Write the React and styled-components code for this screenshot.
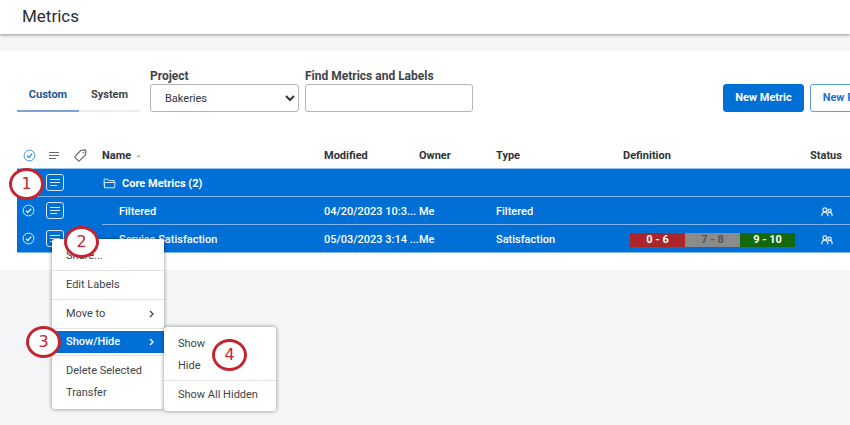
import React from 'react';
import styled, { createGlobalStyle } from 'styled-components';

const GlobalStyle = createGlobalStyle`
    *,
    *::before,
    *::after {
        box-sizing: border-box;
    }

    html {
        background: #f4f5f7;
        overflow: hidden;
    }

    body {
        margin: 0;
        color: #32363a;
        font-family: Roboto, 'Liberation Sans', sans-serif;
        font-size: 11px;
        line-height: 16px;
    }

    button,
    input,
    select {
        font: inherit;
        color: inherit;
    }
`;

const Page = styled.div`
    position: relative;
    min-height: 100vh;
    overflow: hidden;
`;

const Header = styled.header`
    padding: 4px 22px 6px;
    background: #fff;
    box-shadow: 0 1px 3px rgba(0, 0, 0, 0.4);

    h1 {
        margin: 0;
        font-size: 17px;
        line-height: 24px;
        font-weight: 400;
        color: #2b2d30;
    }
`;

const Panel = styled.main`
    margin-top: 17px;
    padding: 17px 0 17px 17px;
    background: #fff;
`;

const Toolbar = styled.div`
    display: flex;
    align-items: flex-end;
    gap: 6px;
`;

const Tabs = styled.div`
    display: flex;
    margin-right: 4px;
`;

const Tab = styled.button`
    width: ${(props) => (props.$active ? '62px' : '61px')};
    padding: 0 0 7px;
    border: none;
    border-bottom: 2px solid ${(props) => (props.$active ? '#7ba5d6' : '#ededef')};
    background: none;
    color: ${(props) => (props.$active ? '#1c5599' : '#404347')};
    font-size: 11px;
    line-height: 16px;
    font-weight: 700;
    cursor: pointer;
`;

const Field = styled.div`
    display: flex;
    flex-direction: column;
    width: ${(props) => props.$width};

    label {
        font-size: 12px;
        font-weight: 700;
        color: #404347;
    }

    select,
    input {
        width: 100%;
        height: 28px;
        border: 1px solid #b4b5b8;
        border-radius: 3px;
        background: #fff;
    }

    select {
        padding: 0 0 0 10px;
    }
`;

const Actions = styled.div`
    display: flex;
    gap: 6px;
    width: 127px;
    margin-left: auto;
    overflow: hidden;
`;

const ActionButton = styled.button`
    flex: none;
    min-width: 81px;
    height: 28px;
    padding: 0 11px;
    border: 1px solid ${(props) => (props.$primary ? '#006fd6' : '#5b9fe3')};
    border-radius: 3px;
    background: ${(props) => (props.$primary ? '#006fd6' : '#fff')};
    color: ${(props) => (props.$primary ? '#fff' : '#1a74d2')};
    font-size: 11px;
    font-weight: 700;
    white-space: nowrap;
    cursor: pointer;
`;

const Table = styled.table`
    width: 100%;
    margin-top: 29px;
    border-collapse: separate;
    border-spacing: 0;
    table-layout: fixed;

    th,
    td {
        height: 28px;
        padding: 2px 0 0;
        text-align: left;
        white-space: nowrap;
    }

    th {
        border-bottom: 1px solid #9cc4ee;
        font-size: 11px;
        font-weight: 700;
        color: #2f3236;
    }

    svg {
        display: block;
    }
`;

const Row = styled.tr`
    background: #006fd6;
    color: #fff;
    font-weight: 500;

    td {
        border-bottom: 1px solid #7fb5eb;
    }

    td:nth-child(-n + 3) {
        padding-top: 0;
        border-bottom-color: ${(props) => (props.$split ? '#006fd6' : '#7fb5eb')};
    }
`;

const HeadLabel = styled.span`
    display: flex;
    align-items: center;
    gap: 5px;
`;

const IconCell = styled.div`
    display: flex;
    padding-left: ${(props) => props.$inset || '5px'};
`;

const GroupName = styled.div`
    display: flex;
    align-items: center;
    gap: 6px;
    padding-left: 1px;
    font-weight: 700;
`;

const MetricName = styled.div`
    padding-left: 17px;
`;

const RowMenuButton = styled.button`
    display: flex;
    align-items: center;
    justify-content: center;
    width: 18px;
    height: 17px;
    padding: 0;
    border: 1px solid #d5e7f9;
    border-radius: 3px;
    background: none;
    color: #d5e7f9;
    cursor: pointer;
`;

const Scale = styled.div`
    display: flex;
    width: 165px;
    margin-left: 7px;
`;

const Band = styled.span`
    flex: 1;
    height: 14px;
    line-height: 14px;
    text-align: center;
    font-weight: 700;
    background: ${(props) => props.$fill};
    color: ${(props) => props.$ink || '#fff'};
`;

const Menu = styled.div`
    position: absolute;
    top: ${(props) => props.$top};
    left: ${(props) => props.$left};
    width: 112px;
    padding: 5px 0;
    border-radius: 3px;
    background: #fff;
    box-shadow: 0 0 4px rgba(0, 0, 0, 0.45);
`;

const MenuGroup = styled.div`
    padding: ${(props) => props.$pad || '3px 0'};

    & + & {
        border-top: 1px solid #e3e4e6;
    }
`;

const MenuItem = styled.button`
    display: flex;
    align-items: center;
    justify-content: space-between;
    width: 100%;
    height: 22px;
    padding: 0 9px 0 14px;
    border: none;
    background: ${(props) => (props.$active ? '#006fd6' : 'none')};
    color: ${(props) => (props.$active ? '#fff' : '#404347')};
    font-size: 11px;
    font-weight: ${(props) => (props.$active ? 500 : 400)};
    white-space: nowrap;
    cursor: pointer;
`;

const Marker = styled.span`
    position: absolute;
    top: ${(props) => props.$top};
    left: ${(props) => props.$left};
    width: 35px;
    height: 32px;
    border: 3px solid #c4242f;
    border-radius: 50%;
    background: #fff;
    color: #c4242f;
    font-family: 'DejaVu Sans', sans-serif;
    font-size: 16px;
    line-height: 25px;
    text-align: center;
`;

const CheckIcon = ({ color }) => (
    <svg width="13" height="13" viewBox="0 0 13 13" fill="none" stroke={color}>
        <circle cx="6.5" cy="6.5" r="5.4" />
        <path d="M4 6.7l1.8 1.8L9.2 4.8" strokeWidth="1.3" />
    </svg>
);

const LinesIcon = ({ color = 'currentColor' }) => (
    <svg width="10" height="9" viewBox="0 0 10 9" fill="none" stroke={color}>
        <path d="M0 1.5h10M0 4.5h10M0 7.5h7" />
    </svg>
);

const TagIcon = () => (
    <svg width="13" height="13" viewBox="0 0 13 13" fill="none" stroke="#66696d">
        <path
            d="M6.6 1.5l4-.6c.8 0 1.3.6 1.3 1.2l-.4 3.7-5.9 5.9c-.4.4-.9.4-1.3 0L1.1 8.6c-.4-.4-.4-.9 0-1.3z"
            strokeWidth="1.2"
            strokeLinejoin="round"
        />
        <circle cx="9.4" cy="3.6" r=".5" strokeWidth=".8" />
    </svg>
);

const FolderIcon = () => (
    <svg width="13" height="11" viewBox="0 0 13 11" fill="none" stroke="#d5e7f9">
        <path
            d="M1.5 9.8L1 1.2h3.8l1 1.3h5.4l.3 1.8M1.5 9.8l-.3-5.3h11l-.7 5.3z"
            strokeLinejoin="round"
        />
    </svg>
);

const SortIcon = () => (
    <svg width="5" height="4" viewBox="0 0 5 4" fill="none" stroke="#85878a">
        <path d="M.8 3.2l1.7-2 1.7 2" />
    </svg>
);

const PeopleIcon = () => (
    <svg
        width="12"
        height="10"
        viewBox="0 0 12 10"
        fill="none"
        stroke="#e5f0fb"
        strokeWidth="1.2"
    >
        <circle cx="3.9" cy="2.8" r="2" />
        <path d="M.8 9.2C.8 6.6 2 5.2 3.9 5.2S6.7 6.6 7 9.2" />
        <circle cx="8.6" cy="3.7" r="1.6" />
        <path d="M7.2 6.1c.4-.5.9-.7 1.5-.7 1.6 0 2.5 1.3 2.5 3.8" />
    </svg>
);

const ChevronIcon = () => (
    <svg width="7" height="8" viewBox="0 0 7 8" fill="none" stroke="currentColor">
        <path d="M2 1l3 3-3 3" strokeWidth="1.3" />
    </svg>
);

const metrics = [
    {
        name: 'Filtered',
        modified: '04/20/2023 10:3...',
        owner: 'Me',
        type: 'Filtered',
    },
    {
        name: 'Service Satisfaction',
        modified: '05/03/2023 3:14 ...',
        owner: 'Me',
        type: 'Satisfaction',
        bands: true,
    },
];

const RowMenu = ({ label }) => (
    <IconCell $inset="3px">
        <RowMenuButton type="button" aria-label={label}>
            <LinesIcon />
        </RowMenuButton>
    </IconCell>
);

const MetricsTable = () => (
    <Table>
        <colgroup>
            <col style={{ width: 26 }} />
            <col style={{ width: 31 }} />
            <col style={{ width: 28 }} />
            <col />
            <col style={{ width: 95 }} />
            <col style={{ width: 77 }} />
            <col style={{ width: 127 }} />
            <col style={{ width: 187 }} />
            <col style={{ width: 40 }} />
        </colgroup>
        <thead>
            <tr>
                <th aria-label="Select">
                    <IconCell $inset="6px">
                        <CheckIcon color="#3d8fdf" />
                    </IconCell>
                </th>
                <th aria-label="Actions">
                    <IconCell $inset="6px">
                        <LinesIcon color="#66696d" />
                    </IconCell>
                </th>
                <th aria-label="Labels">
                    <IconCell $inset="0">
                        <TagIcon />
                    </IconCell>
                </th>
                <th>
                    <HeadLabel>
                        Name <SortIcon />
                    </HeadLabel>
                </th>
                <th>Modified</th>
                <th>Owner</th>
                <th>Type</th>
                <th>Definition</th>
                <th>Status</th>
            </tr>
        </thead>
        <tbody>
            <Row>
                <td>
                    <IconCell>
                        <CheckIcon color="#e5f0fb" />
                    </IconCell>
                </td>
                <td>
                    <RowMenu label="Core Metrics actions" />
                </td>
                <td />
                <td colSpan="6">
                    <GroupName>
                        <FolderIcon /> Core Metrics (2)
                    </GroupName>
                </td>
            </Row>
            {metrics.map((metric, index) => (
                <Row key={metric.name} $split={index < metrics.length - 1}>
                    <td>
                        <IconCell>
                            <CheckIcon color="#e5f0fb" />
                        </IconCell>
                    </td>
                    <td>
                        <RowMenu label={`${metric.name} actions`} />
                    </td>
                    <td />
                    <td>
                        <MetricName>{metric.name}</MetricName>
                    </td>
                    <td>{metric.modified}</td>
                    <td>{metric.owner}</td>
                    <td>{metric.type}</td>
                    <td>
                        {metric.bands && (
                            <Scale>
                                <Band $fill="#ab2428">0 - 6</Band>
                                <Band $fill="#8b8b8b" $ink="#555">
                                    7 - 8
                                </Band>
                                <Band $fill="#13680c">9 - 10</Band>
                            </Scale>
                        )}
                    </td>
                    <td>
                        <IconCell $inset="11px">
                            <PeopleIcon />
                        </IconCell>
                    </td>
                </Row>
            ))}
        </tbody>
    </Table>
);

const App = () => {
    return (
        <Page>
            <GlobalStyle />
            <Header>
                <h1>Metrics</h1>
            </Header>

            <Panel>
                <Toolbar>
                    <Tabs>
                        <Tab type="button" $active>
                            Custom
                        </Tab>
                        <Tab type="button">System</Tab>
                    </Tabs>
                    <Field $width="149px">
                        <label htmlFor="project">Project</label>
                        <select id="project" defaultValue="Bakeries">
                            <option>Bakeries</option>
                        </select>
                    </Field>
                    <Field $width="168px">
                        <label htmlFor="find">Find Metrics and Labels</label>
                        <input id="find" type="text" />
                    </Field>
                    <Actions>
                        <ActionButton type="button" $primary>
                            New Metric
                        </ActionButton>
                        <ActionButton type="button">New Folder</ActionButton>
                    </Actions>
                </Toolbar>
                <MetricsTable />
            </Panel>

            <Menu $top="239px" $left="52px">
                <MenuGroup $pad="1px 0 3px">
                    <MenuItem type="button">Share...</MenuItem>
                </MenuGroup>
                <MenuGroup>
                    <MenuItem type="button">Edit Labels</MenuItem>
                </MenuGroup>
                <MenuGroup>
                    <MenuItem type="button">
                        Move to <ChevronIcon />
                    </MenuItem>
                </MenuGroup>
                <MenuGroup $pad="2px 0">
                    <MenuItem type="button" $active>
                        Show/Hide <ChevronIcon />
                    </MenuItem>
                </MenuGroup>
                <MenuGroup $pad="4px 0 0">
                    <MenuItem type="button">Delete Selected</MenuItem>
                    <MenuItem type="button">Transfer</MenuItem>
                </MenuGroup>
            </Menu>

            <Menu $top="327px" $left="164px">
                <MenuGroup $pad="1px 0 3px">
                    <MenuItem type="button">Show</MenuItem>
                    <MenuItem type="button">Hide</MenuItem>
                </MenuGroup>
                <MenuGroup $pad="3px 0 0">
                    <MenuItem type="button">Show All Hidden</MenuItem>
                </MenuGroup>
            </Menu>

            <Marker $top="168px" $left="9px">1</Marker>
            <Marker $top="226px" $left="64px">2</Marker>
            <Marker $top="326px" $left="26px">3</Marker>
            <Marker $top="339px" $left="212px">4</Marker>
        </Page>
    );
};

export default App;
